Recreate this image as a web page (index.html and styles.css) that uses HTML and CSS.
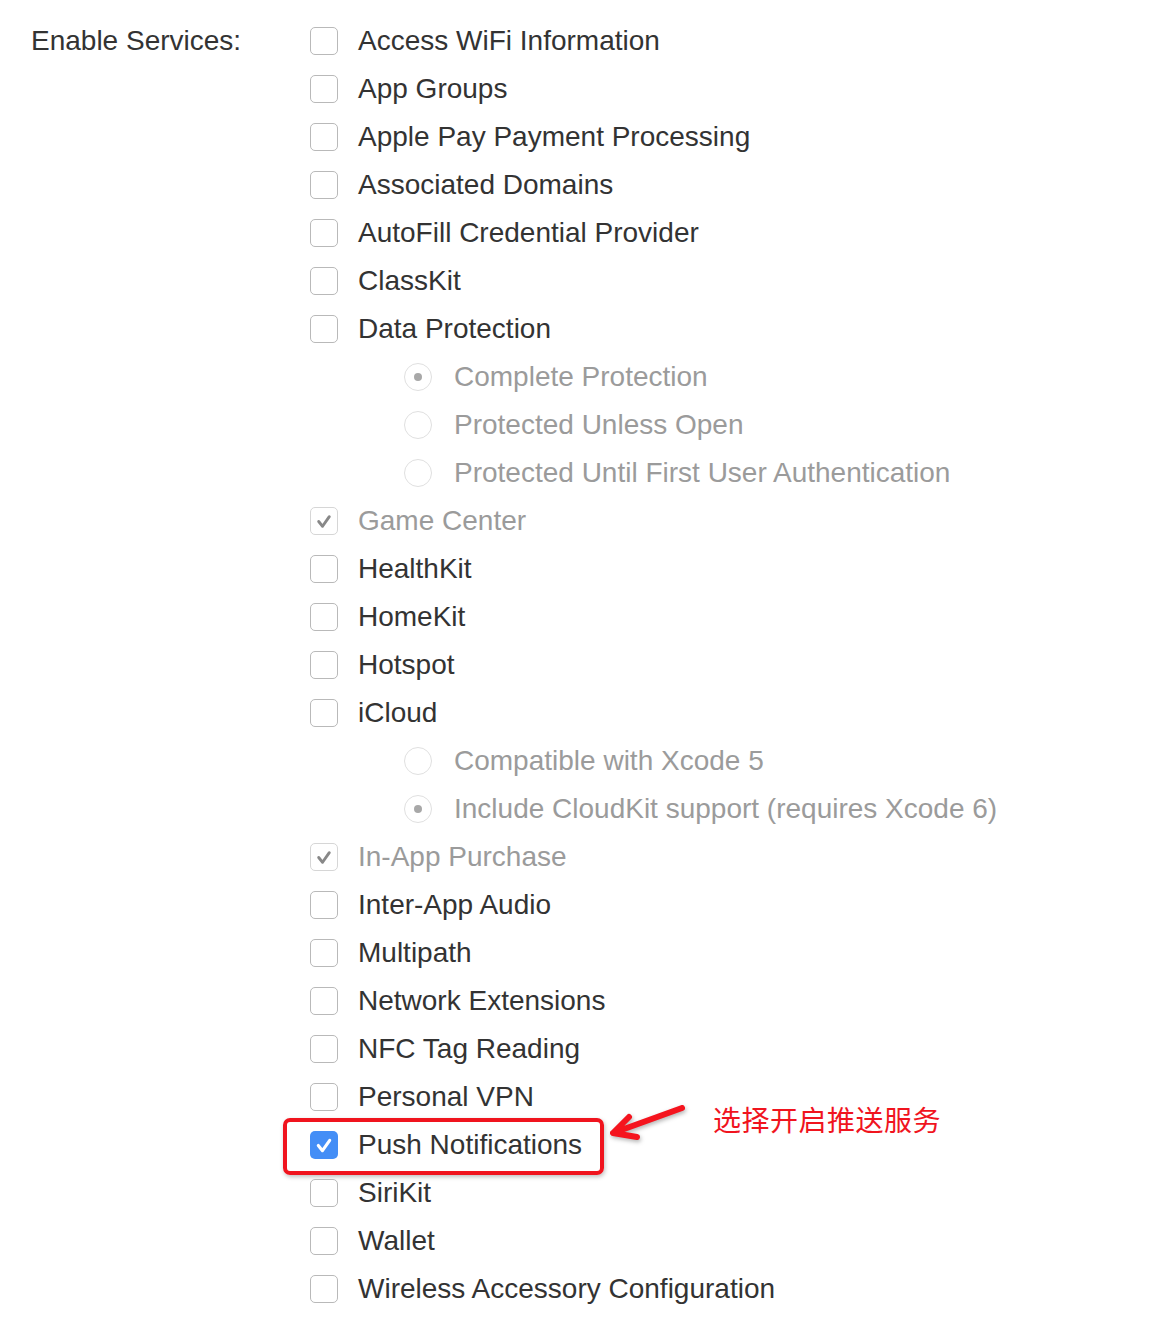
FILE: index.html
```html
<!DOCTYPE html>
<html lang="zh-CN">
<head>
  <meta charset="UTF-8">
  <title>Enable Services</title>
  <link rel="stylesheet" href="styles.css">
</head>
<body>
  <div class="services">
    <div class="label">Enable Services:</div>

    <div class="list">
      <div class="row"><span class="box"></span>Access WiFi Information</div>
      <div class="row"><span class="box"></span>App Groups</div>
      <div class="row"><span class="box"></span>Apple Pay Payment Processing</div>
      <div class="row"><span class="box"></span>Associated Domains</div>
      <div class="row"><span class="box"></span>AutoFill Credential Provider</div>
      <div class="row"><span class="box"></span>ClassKit</div>
      <div class="row"><span class="box"></span>Data Protection</div>
      <div class="row sub disabled"><span class="radio on"></span>Complete Protection</div>
      <div class="row sub disabled"><span class="radio"></span>Protected Unless Open</div>
      <div class="row sub disabled"><span class="radio"></span>Protected Until First User Authentication</div>
      <div class="row disabled">
        <span class="box">
          <svg viewBox="0 0 27 27"><path d="M8 14 l4 5 l7-10" /></svg>
        </span>Game Center
      </div>
      <div class="row"><span class="box"></span>HealthKit</div>
      <div class="row"><span class="box"></span>HomeKit</div>
      <div class="row"><span class="box"></span>Hotspot</div>
      <div class="row"><span class="box"></span>iCloud</div>
      <div class="row sub disabled"><span class="radio"></span>Compatible with Xcode 5</div>
      <div class="row sub disabled"><span class="radio on"></span>Include CloudKit support (requires Xcode 6)</div>
      <div class="row disabled">
        <span class="box">
          <svg viewBox="0 0 27 27"><path d="M8 14 l4 5 l7-10" /></svg>
        </span>In-App Purchase
      </div>
      <div class="row"><span class="box"></span>Inter-App Audio</div>
      <div class="row"><span class="box"></span>Multipath</div>
      <div class="row"><span class="box"></span>Network Extensions</div>
      <div class="row"><span class="box"></span>NFC Tag Reading</div>
      <div class="row"><span class="box"></span>Personal VPN</div>
      <div class="row marked">
        <span class="box checked">
          <svg viewBox="0 0 27 27"><path d="M8 14 l4 5 l7-10" /></svg>
        </span>Push Notifications

        <!-- annotation -->
        <span class="frame"></span>
        <svg class="arrow" viewBox="0 0 90 50">
          <path d="M83 13 L14 38 M30 22 L14 38 L38 42" />
        </svg>
        <span class="note">选择开启推送服务</span>
      </div>
      <div class="row"><span class="box"></span>SiriKit</div>
      <div class="row"><span class="box"></span>Wallet</div>
      <div class="row"><span class="box"></span>Wireless Accessory Configuration</div>
    </div>
  </div>
</body>
</html>
```

FILE: styles.css
```css
body {
  margin: 0;
  background: #fff;
  color: #333;
  font-family: "Liberation Sans", Arial, sans-serif;
  font-size: 28px;
}

.services {
  display: flex;
  padding: 17px 0 0 31px;
}

.label {
  width: 279px;
  height: 48px;
  line-height: 48px;
}

.list {
  display: flex;
  flex-direction: column;
}

.row {
  position: relative;
  display: flex;
  align-items: center;
  height: 48px;
  white-space: nowrap;
}

.row.sub { padding-left: 94px; }

.disabled { color: #9b9b9b; }

.box {
  box-sizing: border-box;
  width: 28px;
  height: 28px;
  margin-right: 20px;
  border: 1px solid #b9b9b9;
  border-radius: 5px;
  background: #fff;
  display: flex;
}

.disabled .box { border-color: #d6d6d6; }

.box svg {
  width: 100%;
  height: 100%;
}

.box svg path {
  fill: none;
  stroke: #888;
  stroke-width: 3;
  stroke-linecap: round;
  stroke-linejoin: round;
}

.box.checked {
  border: none;
  background: #448ef6;
}

.box.checked svg path {
  stroke: #fff;
  stroke-width: 3;
}

.radio {
  box-sizing: border-box;
  width: 28px;
  height: 28px;
  margin-right: 22px;
  border: 1px solid #e0e0e0;
  border-radius: 50%;
  display: flex;
  align-items: center;
  justify-content: center;
}

.radio.on::after {
  content: "";
  width: 8px;
  height: 8px;
  border-radius: 50%;
  background: #a8a8a8;
}

.frame {
  position: absolute;
  left: -27px;
  top: -3px;
  width: 321px;
  height: 57px;
  box-sizing: border-box;
  border: 4px solid #f0141e;
  border-radius: 7px;
  box-shadow: 1px 2px 4px rgba(0, 0, 0, 0.25);
}

.arrow {
  position: absolute;
  left: 289px;
  top: -26px;
  width: 90px;
  height: 50px;
  overflow: visible;
  filter: drop-shadow(1px 2px 2px rgba(0, 0, 0, 0.3));
}

.arrow path {
  fill: none;
  stroke: #f5141e;
  stroke-width: 6;
  stroke-linecap: round;
  stroke-linejoin: round;
}

.note {
  position: absolute;
  left: 403px;
  top: -21px;
  color: #f0141e;
  font-family: "Noto Sans CJK SC", sans-serif;
  font-size: 28px;
  line-height: 38px;
  letter-spacing: 0.5px;
}
```
